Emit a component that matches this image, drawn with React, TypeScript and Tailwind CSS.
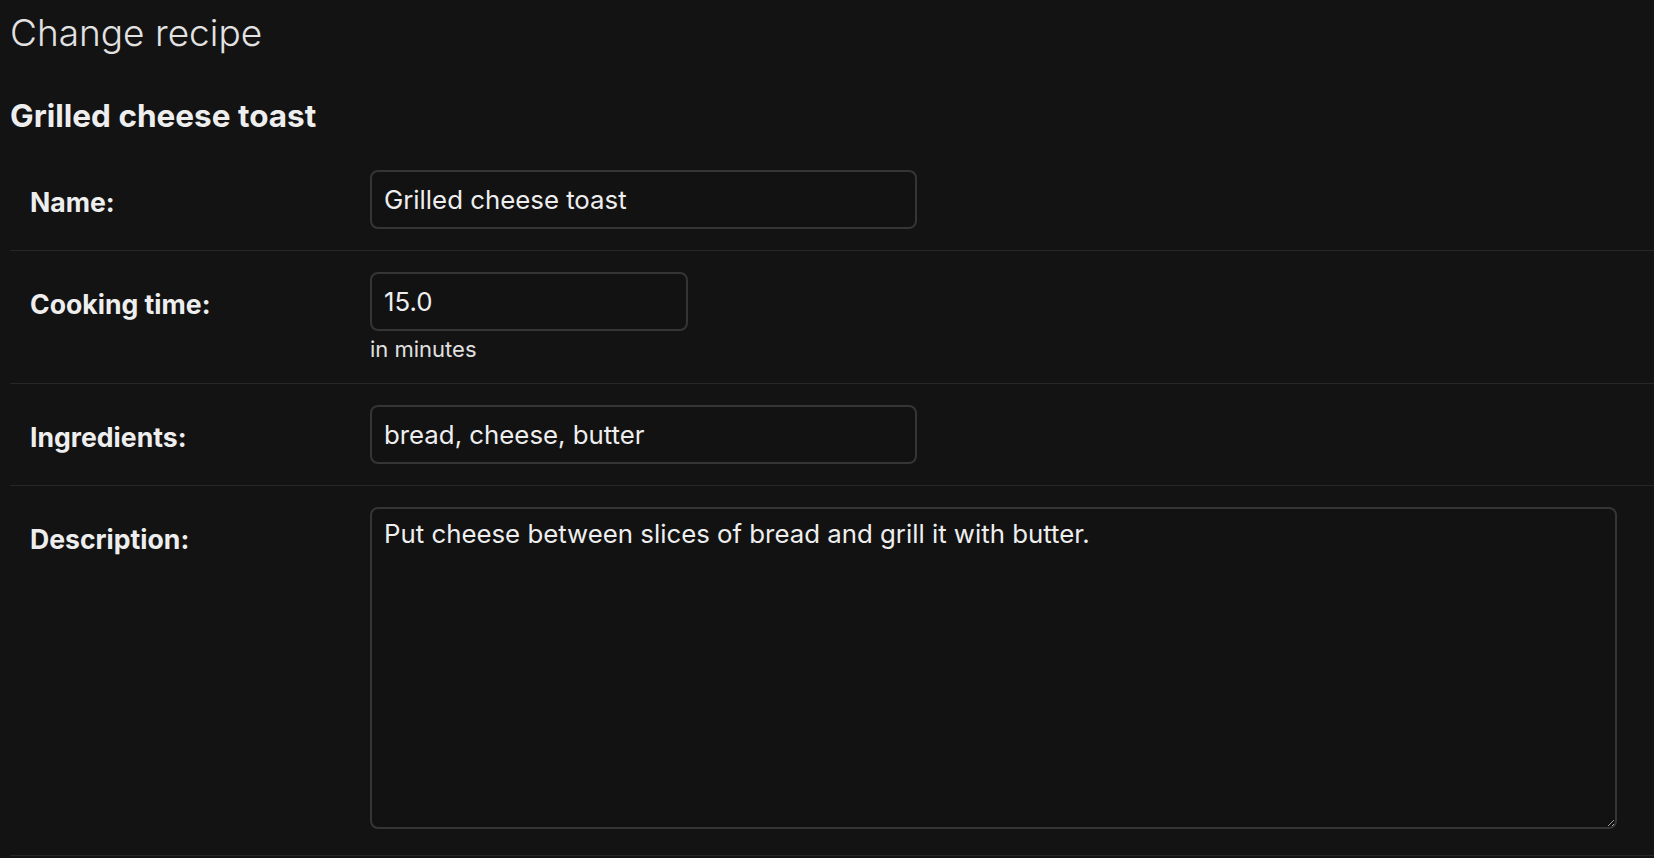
import { ReactNode } from 'react';

function Row({ label, children, last }: { label: string; children: ReactNode; last?: boolean }) {
  return (
    <div
      className={`flex items-start border-b border-[#272727] pl-5 pt-[21px] ${last ? 'pb-[26px]' : 'pb-[21px]'}`}
    >
      <label className="w-[340px] shrink-0 pt-[13px] text-[26.6px] leading-[38px] font-bold text-[#eeeeee]">
        {label}
      </label>
      <div className="flex flex-col">{children}</div>
    </div>
  );
}

const inputClass =
  'h-[59px] rounded-lg border-2 border-[#353535] bg-[#121212] pl-[12px] pr-3 text-[25.8px] text-[#eeeeee] outline-none';

export default function App() {
  return (
    <div className="min-h-screen bg-[#131313] pl-[10px] pt-[9px] font-[Inter,sans-serif] [color-scheme:dark]">
      {/* page title */}
      <h1 className="text-[37px] leading-[48px] font-light text-[#e2e2e2]">Change recipe</h1>
      <h2 className="mt-[41px] mb-[15px] text-[31.5px] leading-[36px] font-bold text-[#eeeeee]">
        Grilled cheese toast
      </h2>

      <form>
        <Row label="Name:">
          <input className={`${inputClass} w-[547px]`} defaultValue="Grilled cheese toast" readOnly />
        </Row>

        <Row label="Cooking time:">
          <input className={`${inputClass} w-[318px]`} defaultValue="15.0" readOnly />
          <p className="mt-[5px] text-[22px] leading-[26px] text-[#e0e0e0]">in minutes</p>
        </Row>

        <Row label="Ingredients:">
          <input className={`${inputClass} w-[547px]`} defaultValue="bread, cheese, butter" readOnly />
        </Row>

        <Row label="Description:" last>
          <textarea
            className="block h-[322px] w-[1247px] rounded-lg border-2 border-[#353535] bg-[#121212] px-3 pt-[9px] text-[25.8px] leading-[32px] text-[#eeeeee] outline-none"
            defaultValue="Put cheese between slices of bread and grill it with butter."
            readOnly
          />
        </Row>
      </form>
    </div>
  );
}
